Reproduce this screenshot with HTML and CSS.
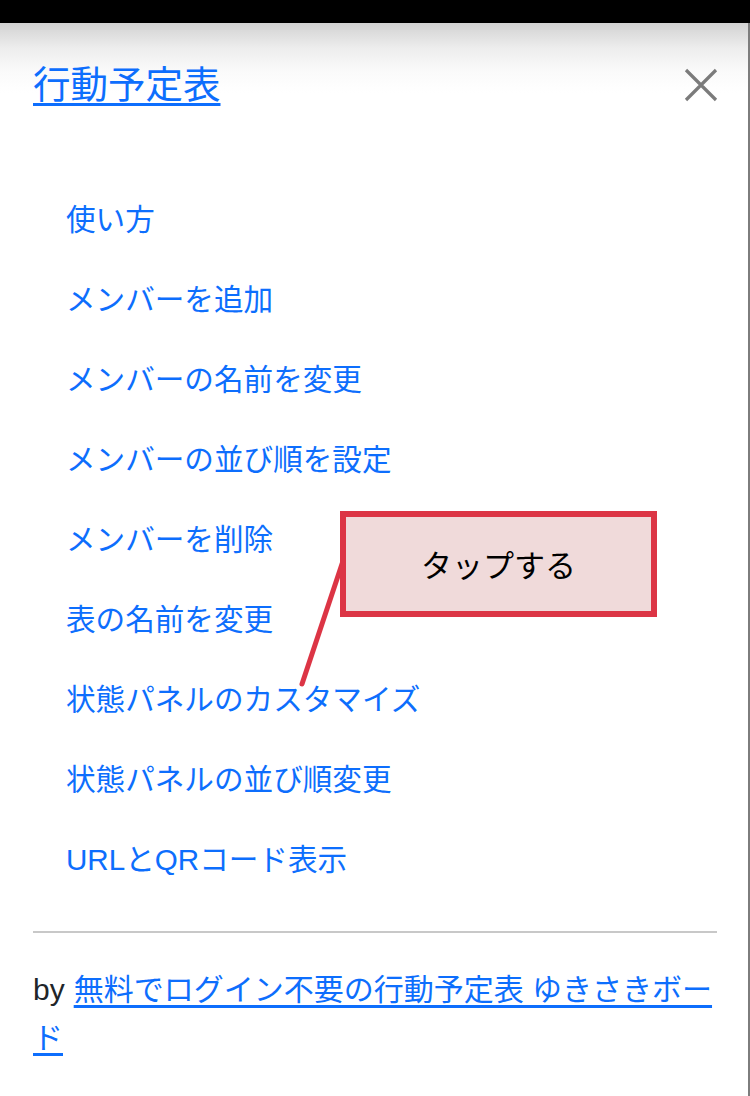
FILE: index.html
```html
<!DOCTYPE html>
<html lang="ja">
<head>
<meta charset="utf-8">
<title>行動予定表</title>
<link rel="stylesheet" href="styles.css">
</head>
<body>
<div class="topbar"></div>
<div class="panel">
  <div class="header">
    <a class="title" href="#">行動予定表</a>
    <button class="close" aria-label="閉じる">
      <svg width="34" height="34" viewBox="0 0 34 34"><path d="M2 2L32 32M32 2L2 32" stroke="#7b7b7b" stroke-width="3.2" stroke-linecap="butt" fill="none"/></svg>
    </button>
  </div>
  <nav class="nav">
    <a class="nav-link" href="#">使い方</a>
    <a class="nav-link" href="#">メンバーを追加</a>
    <a class="nav-link" href="#">メンバーの名前を変更</a>
    <a class="nav-link" href="#">メンバーの並び順を設定</a>
    <a class="nav-link" href="#">メンバーを削除</a>
    <a class="nav-link" href="#">表の名前を変更</a>
    <a class="nav-link" href="#">状態パネルのカスタマイズ</a>
    <a class="nav-link" href="#">状態パネルの並び順変更</a>
    <a class="nav-link" href="#">URLとQRコード表示</a>
  </nav>
  <hr class="divider">
  <p class="footer"><span class="by">by</span><a href="#">無料でログイン不要の行動予定表 ゆきさきボード</a></p>
</div>
<svg class="pointer" width="750" height="1096" viewBox="0 0 750 1096"><line x1="343" y1="561" x2="302" y2="684" stroke="#dc3545" stroke-width="5" stroke-linecap="round"/></svg>
<div class="callout">タップする</div>
</body>
</html>
```
FILE: styles.css
```css
html, body {
  margin: 0;
  padding: 0;
  height: 100%;
  overflow: hidden;
  background: #fff;
}
body {
  font-family: "Liberation Sans", "Noto Sans CJK JP", sans-serif;
  color: #212529;
  position: relative;
}
.topbar {
  height: 23px;
  background: #000;
}
.panel {
  height: 1073px;
  box-sizing: border-box;
  padding: 0 31px 0 33px;
  border-right: 2px solid #7d7d7d;
  background: linear-gradient(#d2d2d2 0px, #ededed 25px, #fafafa 48px, #fff 70px);
}
.header {
  display: flex;
  justify-content: space-between;
  align-items: center;
  padding: 34px 0 67px;
}
.title {
  font-size: 37.5px;
  line-height: 56px;
  color: #0d6efd;
  text-decoration: underline;
  text-decoration-thickness: 3px;
  text-underline-offset: 5px;
}
.close {
  border: 0;
  background: none;
  padding: 0;
  margin-right: -1px;
  width: 34px;
  height: 34px;
  display: flex;
}
.nav {
  display: flex;
  flex-direction: column;
}
.nav-link {
  display: block;
  padding: 16px 33px;
  font-size: 29.6px;
  line-height: 48px;
  color: #0d6efd;
  text-decoration: none;
}
.divider {
  margin: 31px 0 0;
  border: 0;
  border-top: 2px solid #c8c8c8;
  height: 0;
}
.footer {
  margin: 33px 0 0;
  font-size: 30px;
  line-height: 48px;
  color: #212529;
}
.by {
  margin-right: 9px;
}
.footer a {
  color: #0d6efd;
  text-decoration: underline;
  text-decoration-thickness: 3px;
  text-underline-offset: 5px;
}
.pointer {
  position: absolute;
  left: 0;
  top: 0;
  pointer-events: none;
}
.callout {
  position: absolute;
  left: 340px;
  top: 511px;
  width: 317px;
  height: 106px;
  box-sizing: border-box;
  border: 6px solid #dc3545;
  background: #f0dada;
  display: flex;
  align-items: center;
  justify-content: center;
  font-family: "Noto Sans CJK JP", sans-serif;
  font-size: 31px;
  color: #000;
  padding-bottom: 2px;
}
```
